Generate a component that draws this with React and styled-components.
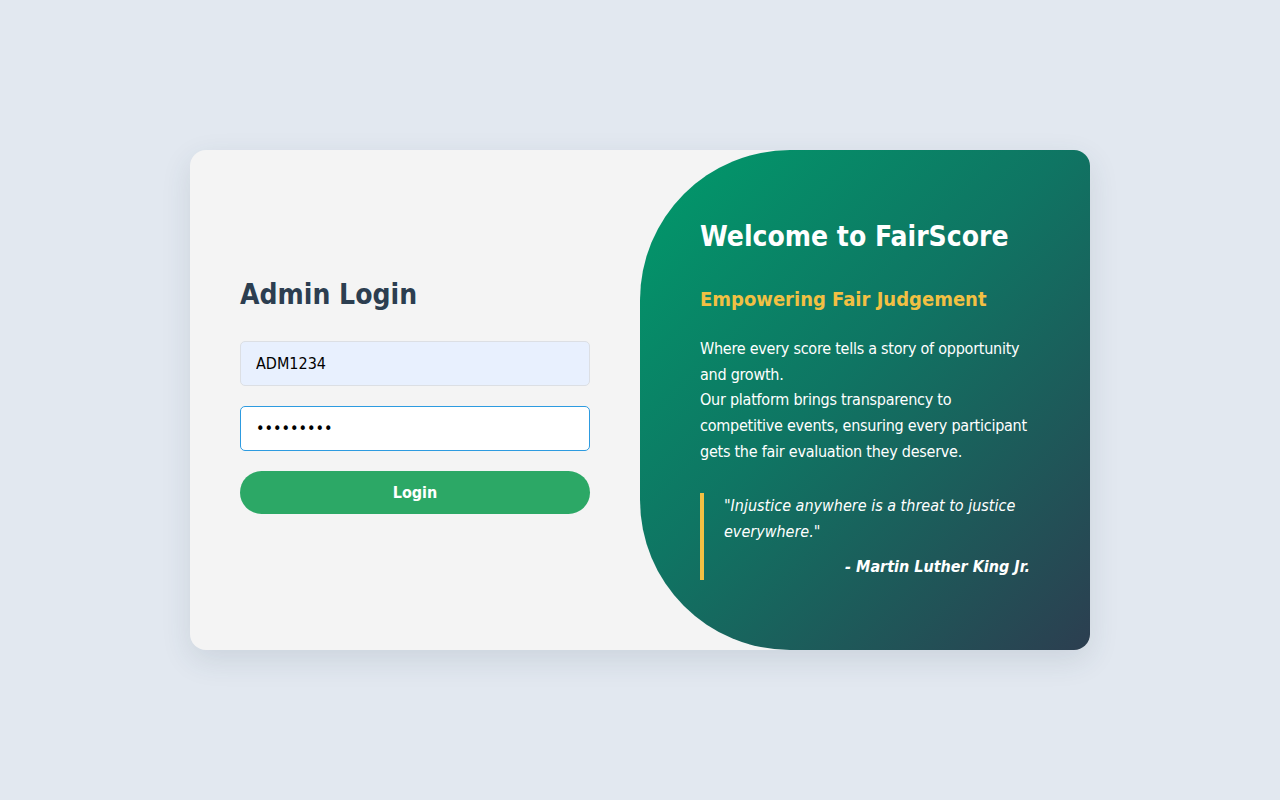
import React from "react";
import styled, { createGlobalStyle } from "styled-components";

//global
const GlobalStyle = createGlobalStyle`
    * {
        box-sizing: border-box;
    }
    body {
        margin: 0;
        background: #e2e8f0;
        font-family: "DejaVu Sans Condensed", "DejaVu Sans", sans-serif;
    }
`;

//styles
const Page = styled.div`
    height: 100vh;
    display: flex;
    align-items: center;
    justify-content: center;
`;

const Card = styled.div`
    width: 900px;
    height: 500px;
    display: flex;
    background: #f4f4f4;
    border-radius: 16px;
    overflow: hidden;
    box-shadow: 0 10px 30px rgba(44, 62, 80, 0.12);
`;

const LoginSide = styled.div`
    width: 50%;
    min-width: 0;
    padding: 0 50px 8px;
    display: flex;
    flex-direction: column;
    justify-content: center;
`;

const LoginTitle = styled.h2`
    margin: 0 0 30px;
    font-size: 28px;
    font-weight: 700;
    color: #2c3e50;
`;

const Form = styled.form`
    display: flex;
    flex-direction: column;
    gap: 20px;
`;

const Input = styled.input`
    height: 45px;
    width: 100%;
    min-width: 0;
    padding: 0 15px;
    font-family: inherit;
    font-size: 16px;
    color: #000;
    border-radius: 5px;
    border: 1px solid ${(p) => (p.$focused ? "#2d9be0" : "#dcdfe4")};
    background: ${(p) => (p.$filled ? "#e8f0fe" : "#fff")};
    outline: none;
`;

const LoginButton = styled.button`
    height: 43px;
    border: none;
    border-radius: 25px;
    background: #2ca866;
    color: #fff;
    font-family: inherit;
    font-size: 16px;
    font-weight: 700;
    cursor: pointer;
`;

const WelcomeSide = styled.div`
    width: 50%;
    min-width: 0;
    padding: 0 60px;
    display: flex;
    flex-direction: column;
    justify-content: center;
    color: #fff;
    border-radius: 150px 0 0 150px;
    background: linear-gradient(135deg, #009b6b 0%, #0f7563 45%, #2c3e50 100%);
`;

const WelcomeTitle = styled.h1`
    margin: 0 0 34px;
    font-size: 28px;
    font-weight: 700;
`;

const Tagline = styled.h3`
    margin: 0 0 25px;
    font-size: 20px;
    font-weight: 700;
    color: #f2c043;
`;

const Blurb = styled.p`
    margin: 0 0 29px;
    font-size: 16px;
    line-height: 1.6;
    letter-spacing: -0.25px;
`;

const Quote = styled.blockquote`
    margin: 0;
    padding-left: 20px;
    border-left: 4px solid #f2c043;
    font-size: 16px;
    line-height: 1.6;
`;

const QuoteText = styled.p`
    margin: 0;
    font-style: italic;
`;

const QuoteAuthor = styled.p`
    margin: 10px 0 0;
    text-align: right;
    font-style: italic;
    font-weight: 700;
`;

//page component
const App = () => {
    return (
        <>
            <GlobalStyle />
            <Page>
                <Card>
                    <LoginSide>
                        <LoginTitle>Admin Login</LoginTitle>
                        <Form onSubmit={(e) => e.preventDefault()}>
                            <Input
                                type="text"
                                defaultValue="ADM1234"
                                $filled
                            />
                            <Input
                                type="password"
                                defaultValue="admin1234"
                                $focused
                                autoFocus
                            />
                            <LoginButton type="submit">Login</LoginButton>
                        </Form>
                    </LoginSide>
                    <WelcomeSide>
                        <WelcomeTitle>Welcome to FairScore</WelcomeTitle>
                        <Tagline>Empowering Fair Judgement</Tagline>
                        <Blurb>
                            Where every score tells a story of opportunity and
                            growth.
                            <br />
                            Our platform brings transparency to competitive
                            events, ensuring every participant gets the fair
                            evaluation they deserve.
                        </Blurb>
                        <Quote>
                            <QuoteText>
                                "Injustice anywhere is a threat to justice
                                everywhere."
                            </QuoteText>
                            <QuoteAuthor>- Martin Luther King Jr.</QuoteAuthor>
                        </Quote>
                    </WelcomeSide>
                </Card>
            </Page>
        </>
    );
};

export default App;
